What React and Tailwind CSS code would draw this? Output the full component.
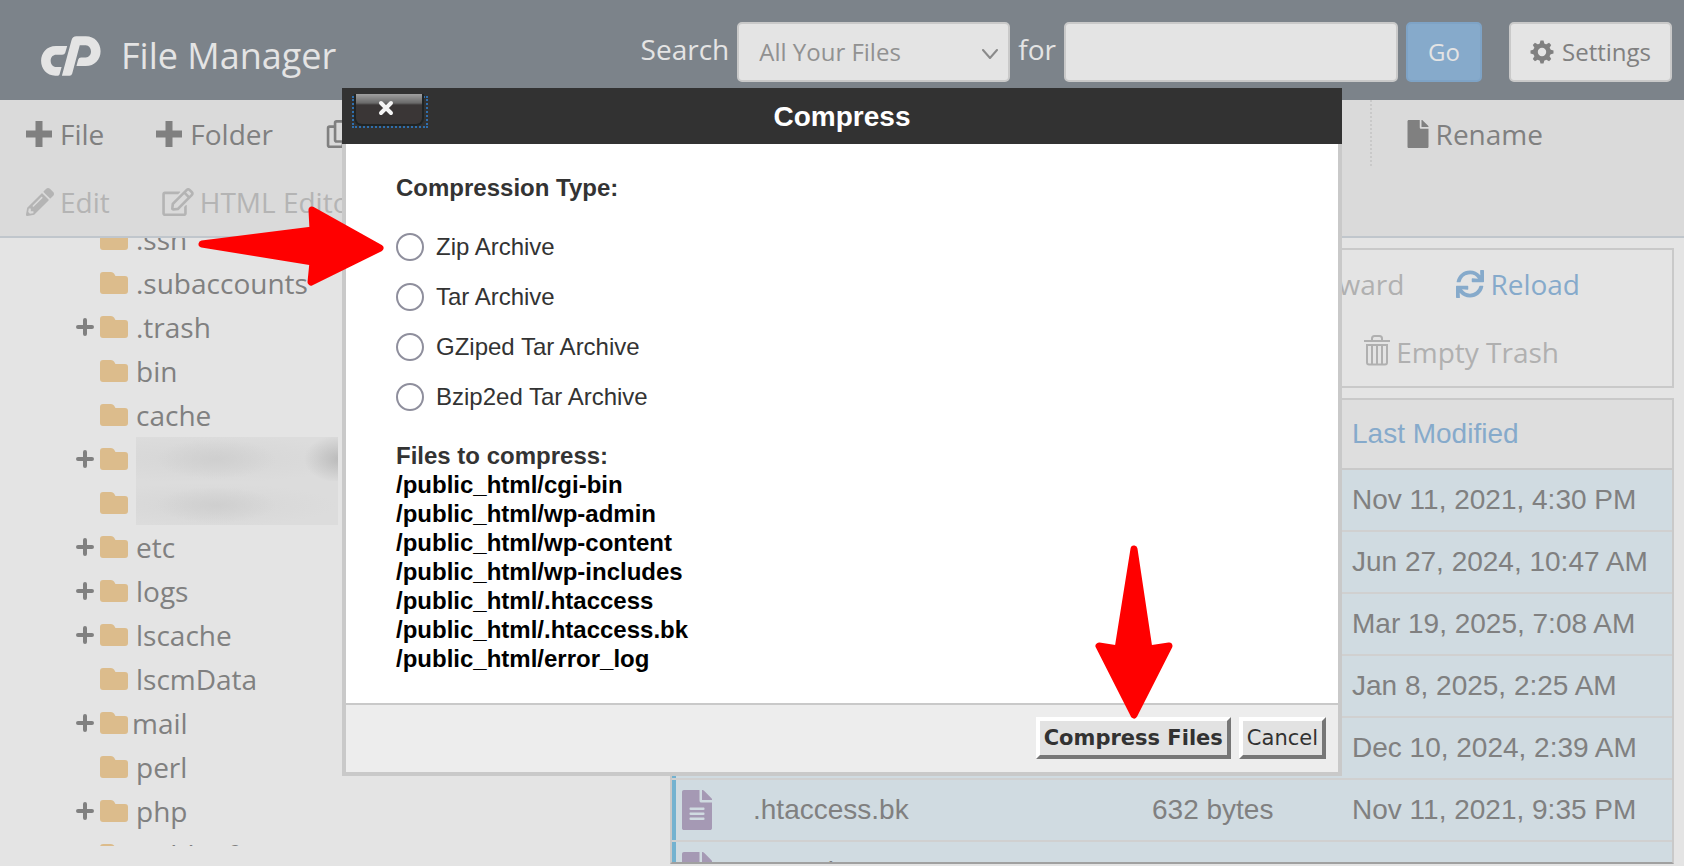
import React from "react";
import { FaFile, FaFileAlt, FaFolder, FaPencilAlt, FaRegCopy, FaRegEdit, FaSync } from "react-icons/fa";

const tree = [
  { name: ".ssh" },
  { name: ".subaccounts" },
  { name: ".trash", open: true },
  { name: "bin" },
  { name: "cache" },
  { redacted: "wide", open: true },
  { redacted: "narrow" },
  { name: "etc", open: true },
  { name: "logs", open: true },
  { name: "lscache", open: true },
  { name: "lscmData" },
  { name: "mail", open: true, tight: true },
  { name: "perl" },
  { name: "php", open: true },
  { name: "public_ftp" },
];

const files = [
  { name: "cgi-bin", size: "4 KB", date: "Nov 11, 2021, 4:30 PM", folder: true },
  { name: "wp-admin", size: "4 KB", date: "Jun 27, 2024, 10:47 AM", folder: true },
  { name: "wp-content", size: "4 KB", date: "Mar 19, 2025, 7:08 AM", folder: true },
  { name: "wp-includes", size: "12 KB", date: "Jan 8, 2025, 2:25 AM", folder: true },
  { name: ".htaccess", size: "1 KB", date: "Dec 10, 2024, 2:39 AM" },
  { name: ".htaccess.bk", size: "632 bytes", date: "Nov 11, 2021, 9:35 PM" },
  { name: "error_log", size: "11.26 KB", date: "Mar 19, 2025, 5:50 PM" },
];

const types = ["Zip Archive", "Tar Archive", "GZiped Tar Archive", "Bzip2ed Tar Archive"];

const paths = [
  "/public_html/cgi-bin",
  "/public_html/wp-admin",
  "/public_html/wp-content",
  "/public_html/wp-includes",
  "/public_html/.htaccess",
  "/public_html/.htaccess.bk",
  "/public_html/error_log",
];

function Logo() {
  return (
    <svg viewBox="33 47 181 121" className="h-10 w-[60px]" fill="currentColor" aria-hidden="true">
      <path d="M112 77H78C50 77 33 98 33 122S50 167 76 167H84Q88 167 89 163L95 141H79C69 141 62 133 62 122S69 104 79 104H97Q104 104 106 98Z" />
      <path d="M96 167 125 60Q128 48 140 48H168C196 48 213 69 213 93S195 138 168 138H140L145 119Q147 112 154 112H168C178 112 184 103 184 94S178 75 168 75H150L127 161Q125 167 119 167Z" />
    </svg>
  );
}

function Plus() {
  return (
    <svg viewBox="0 0 26 26" className="size-[26px]" fill="currentColor" aria-hidden="true">
      <path d="M9.500 0h7v9.500H26v7h-9.500V26h-7v-9.500H0v-7h9.500z" />
    </svg>
  );
}

function Gear() {
  return (
    <svg viewBox="-12 -12 24 24" className="size-6" aria-hidden="true">
      <circle r="6.500" fill="none" stroke="currentColor" strokeWidth="4.600" />
      {[0, 45, 90, 135, 180, 225, 270, 315].map((a) => (
        <path key={a} transform={`rotate(${a})`} d="M-2.500-8-1.500-11.500h3L2.500-8z" fill="currentColor" />
      ))}
    </svg>
  );
}

function Trash() {
  return (
    <svg viewBox="0 0 26 31" className="mb-1 h-[31px] w-[26px]" fill="none" stroke="currentColor" strokeWidth="2" aria-hidden="true">
      <path d="M0 6h26M8 6V3.500Q8 1 10.500 1h5Q18 1 18 3.500V6M3 10h20v17.500q0 2-2 2H5q-2 0-2-2zM8 10v19M13 10v19M18 10v19" />
    </svg>
  );
}

function ToolButton({ icon, children, className = "text-[#808080]", gap = "gap-2" }) {
  return (
    <button type="button" className={`flex h-[68px] shrink-0 items-center whitespace-nowrap ${gap} ${className}`}>
      {icon}
      <span>{children}</span>
    </button>
  );
}

function Header() {
  return (
    <header className="flex h-[100px] shrink-0 items-center bg-[#7c838a] pr-3 pl-[41px] text-[#e4e4e4]">
      <div className="flex items-center gap-5 pt-3">
        <Logo />
        <h1 className="text-4xl leading-10">File Manager</h1>
      </div>
      <form className="ml-auto flex items-center gap-2 pt-1" onSubmit={(e) => e.preventDefault()}>
        <label htmlFor="scope" className="pb-1.5">Search</label>
        <div className="relative">
          <select id="scope" className="h-[60px] w-[273px] appearance-none rounded-[5px] border-2 border-[#c9c9c9] bg-[#e4e4e4] pl-5 text-2xl text-[#919191]">
            <option>All Your Files</option>
          </select>
          <svg viewBox="0 0 16 10" className="pointer-events-none absolute top-[27px] right-3 h-2.5 w-4" fill="none" stroke="#8a8a8a" strokeWidth="2" strokeLinecap="round" strokeLinejoin="round" aria-hidden="true">
            <path d="M1 1l7 8 7-8" />
          </svg>
        </div>
        <label htmlFor="query" className="pb-1.5">for</label>
        <input id="query" type="text" className="h-[60px] w-[334px] rounded-[5px] border-2 border-[#c9c9c9] bg-[#e4e4e4] px-5" />
        <button type="submit" className="h-[60px] w-[76px] rounded-[5px] border-2 border-[#7ea3c6] bg-[#86aacb] text-2xl">Go</button>
      </form>
      <button type="button" className="mt-1 ml-[27px] flex h-[60px] w-[163px] items-center justify-center gap-2 rounded-[5px] border-2 border-[#c9c9c9] bg-[#e4e4e4] text-2xl text-[#808080]">
        <Gear />
        <span>Settings</span>
      </button>
    </header>
  );
}

function Toolbar() {
  return (
    <div className="shrink-0 overflow-hidden border-b-2 border-[#c0c6cc] bg-[#dadada] pl-[26px]">
      <div className="flex">
        <div className="flex gap-[52px]">
          <ToolButton icon={<Plus />}>File</ToolButton>
          <ToolButton icon={<Plus />}>Folder</ToolButton>
          <ToolButton icon={<FaRegCopy className="size-7" />}>Copy</ToolButton>
        </div>
        <div className="ml-auto flex h-[66px] border-l-2 border-dotted border-[#c9c9c9] pr-[141px] pl-8">
          <ToolButton icon={<FaFile className="size-7" />} gap="gap-1">Rename</ToolButton>
        </div>
      </div>
      <div className="flex gap-[52px]">
        <ToolButton icon={<FaPencilAlt className="size-7" />} gap="gap-1.5" className="text-[#b4b4b4]">Edit</ToolButton>
        <ToolButton icon={<FaRegEdit className="h-7 w-8" />} gap="gap-1.5" className="text-[#b4b4b4]">HTML Editor</ToolButton>
      </div>
    </div>
  );
}

function RedactedName({ kind }) {
  return kind === "wide" ? (
    <div className="h-full w-[202px] bg-[radial-gradient(ellipse_60px_20px_at_80px_22px,#cfcfcf,transparent),radial-gradient(ellipse_36px_24px_at_204px_22px,#bababa,transparent),radial-gradient(ellipse_150px_24px_at_70px_22px,#d6d6d6,transparent)] bg-[#dcdcdc]" />
  ) : (
    <div className="h-full w-[202px] bg-[radial-gradient(ellipse_60px_18px_at_80px_24px,#cfcfcf,transparent),radial-gradient(ellipse_130px_22px_at_70px_24px,#d6d6d6,transparent)] bg-[#dcdcdc]" />
  );
}

function Tree() {
  return (
    <nav className="mb-5 w-[660px] shrink-0 overflow-hidden text-[#808080]" aria-label="Folders">
      <ul className="-mt-[21px]">
        {tree.map((item, i) => (
          <li key={i} className="flex h-11 items-center pl-[76px]">
            <span className="flex w-6 shrink-0">
              {item.open && (
                <svg viewBox="0 0 18 18" className="size-[18px]" stroke="currentColor" strokeWidth="4" strokeLinecap="round" aria-hidden="true">
                  <path d="M9 2v14M2 9h14" />
                </svg>
              )}
            </span>
            <svg viewBox="0 0 28 22" className="mr-2 h-[22px] w-7 shrink-0" fill="#dcbc8c" aria-hidden="true">
              <path d="M0 3Q0 0 3 0h8q2 0 3 1.500L15.500 4H25q3 0 3 3v12q0 3-3 3H3q-3 0-3-3z" />
            </svg>
            {item.redacted ? (
              <RedactedName kind={item.redacted} />
            ) : (
              <a href="#" className={item.tight ? "-ml-1" : ""}>{item.name}</a>
            )}
          </li>
        ))}
      </ul>
    </nav>
  );
}

function FileList() {
  return (
    <main className="mb-0.5 flex min-w-0 flex-1 flex-col gap-2.5 pt-2.5 pr-2.5 pl-2.5">
      <div className="shrink-0 border-2 border-[#c9c9c9]">
        <div className="flex justify-end gap-[52px] pr-[92px]">
          <ToolButton icon={null} className="text-[#b0b0b0]">Forward</ToolButton>
          <ToolButton icon={<FaSync className="size-7" />} gap="gap-1.5" className="text-[#86aacb]">Reload</ToolButton>
        </div>
        <div className="flex justify-end pr-[113px]">
          <ToolButton icon={<Trash />} gap="gap-1.5" className="text-[#b0b0b0]">Empty Trash</ToolButton>
        </div>
      </div>
      <div className="min-h-0 flex-1 overflow-hidden border-2 border-[#c9c9c9] border-b-[#a0a0a0]">
        <table className="w-full table-fixed border-separate border-spacing-0 text-left font-['Liberation_Sans',Arial,sans-serif] text-[#808080]">
          <colgroup>
            <col className="w-[81px]" />
            <col />
            <col className="w-[200px]" />
            <col className="w-80" />
          </colgroup>
          <thead>
            <tr className="bg-[#dedede] text-[#86aacb]">
              <th className="h-[70px] border-b-2 border-[#c9c9c9] p-0" aria-label="Kind" />
              <th className="border-b-2 border-[#c9c9c9] p-0 font-normal">Name</th>
              <th className="border-b-2 border-[#c9c9c9] p-0 font-normal">Size</th>
              <th className="border-b-2 border-[#c9c9c9] p-0 font-normal">Last Modified</th>
            </tr>
          </thead>
          <tbody>
            {files.map((f) => (
              <tr key={f.name} className="bg-[#d0dbe1]">
                <td className="border-b-2 border-[#d0d0d0] p-0">
                  <div className="flex h-[60px] items-center border-l-4 border-[#73b2d0] pl-1.5">
                    {f.folder ? <FaFolder className="size-8 text-[#dcbc8c]" /> : <FaFileAlt className="h-10 w-[30px] text-[#a599b4]" />}
                  </div>
                </td>
                <td className="border-b-2 border-[#d0d0d0] p-0">{f.name}</td>
                <td className="border-b-2 border-[#d0d0d0] p-0">{f.size}</td>
                <td className="border-b-2 border-[#d0d0d0] p-0">{f.date}</td>
              </tr>
            ))}
          </tbody>
        </table>
      </div>
    </main>
  );
}

const dialogButton =
  "h-[42px] border-4 border-t-white border-r-[#767676] border-b-[#767676] border-l-white bg-[#e2e2e2] px-1 text-[21px] leading-8 text-[#323232]";

function CompressDialog() {
  return (
    <div role="dialog" aria-labelledby="dialog-title" className="fixed top-[88px] left-1/2 w-[1000px] -translate-x-1/2 font-['Liberation_Sans',Arial,sans-serif] text-2xl text-[#333]">
      <div className="relative bg-[#323232] text-white">
        <h2 id="dialog-title" className="pt-[9px] pb-[7px] text-center text-[28px] leading-10 font-bold">Compress</h2>
        <button type="button" aria-label="Close" className="absolute top-2 left-2.5 flex h-8 w-[76px] border-2 border-dotted border-[#2f6fae]">
          <span className="-mt-1 flex h-8 w-[70px] items-center justify-center rounded-b-lg border-x-2 border-b-2 border-[#202424] bg-[linear-gradient(#a0a0a0_0,#6a6a6a_9px,#3a3636_11px,#3a3636_100%)] pr-1.5 pb-0.5">
            <svg viewBox="0 0 16 16" className="size-4" stroke="#f4f4f4" strokeWidth="4" strokeLinecap="round" aria-hidden="true">
              <path d="M3 3l10 10M13 3L3 13" />
            </svg>
          </span>
        </button>
      </div>
      <form className="border-4 border-t-0 border-[#c9c9c9] bg-white" onSubmit={(e) => e.preventDefault()}>
        <div className="px-[50px] pt-[30px] pb-[30px]">
          <fieldset>
            <legend className="font-bold leading-7">Compression Type:</legend>
            <div className="pt-5">
              {types.map((t, i) => (
                <label key={t} className="flex h-[50px] items-center gap-3">
                  <input type="radio" name="type" value={i} className="size-7 appearance-none rounded-full border-2 border-[#8f8f9d] bg-white" />
                  {t}
                </label>
              ))}
            </div>
          </fieldset>
          <div className="pt-[19px] font-bold leading-[29px]">
            <p>Files to compress:</p>
            <ul className="text-black">
              {paths.map((p) => (
                <li key={p}>{p}</li>
              ))}
            </ul>
          </div>
        </div>
        <div className="flex justify-end gap-2 border-t-2 border-[#c9c9c9] bg-[#ededed] px-3 pt-3 pb-[13px] font-['DejaVu_Sans',Verdana,sans-serif]">
          <button type="submit" className={`${dialogButton} font-bold`}>Compress Files</button>
          <button type="button" className={dialogButton}>Cancel</button>
        </div>
      </form>
      <svg viewBox="0 0 1000 690" className="pointer-events-none absolute top-0 left-0 h-[690px] w-[1000px] overflow-visible" fill="#f00" stroke="#f00" strokeWidth="7" strokeLinejoin="round" aria-hidden="true">
        <path d="M-140 156-29 142-30 122 38 160-31 194-29 174z" />
        <path d="M792 461 807 561 827 558 792 627 757 558 776 561z" />
      </svg>
    </div>
  );
}

export default function App() {
  return (
    <div className="flex h-screen flex-col overflow-hidden bg-[#e4e4e4] font-['Open_Sans','Noto_Sans',sans-serif] text-[28px] leading-9">
      <Header />
      <Toolbar />
      <div className="flex min-h-0 flex-1">
        <Tree />
        <FileList />
      </div>
      <CompressDialog />
    </div>
  );
}
